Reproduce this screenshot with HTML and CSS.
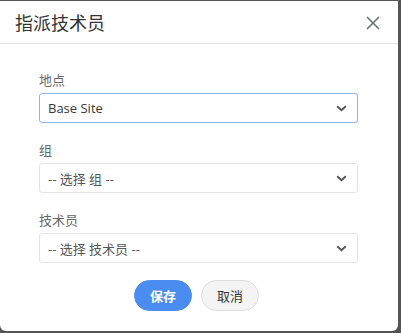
FILE: index.html
```html
<!DOCTYPE html>
<html lang="zh-CN">
<head>
  <meta charset="UTF-8" />
  <title>指派技术员</title>
  <link rel="stylesheet" href="styles.css">
</head>
<body>
  <div class="modal">
    <div class="modal-header">
      <h2 class="title">指派技术员</h2>
      <svg class="close" width="14" height="14" viewBox="0 0 14 14"><path d="M1 1L13 13M13 1L1 13" stroke="#6b7178" stroke-width="1.6" fill="none"/></svg>
    </div>
    <div class="modal-body">
      <div class="field">
        <label>地点</label>
        <div class="select focus"><span class="value">Base Site</span><svg width="11" height="7" viewBox="0 0 11 7"><path d="M1.2 1.2L5.5 5.3L9.8 1.2" stroke="#555" stroke-width="1.9" fill="none"/></svg></div>
      </div>
      <div class="field">
        <label>组</label>
        <div class="select"><span class="placeholder">-- 选择 组 --</span><svg width="11" height="7" viewBox="0 0 11 7"><path d="M1.2 1.2L5.5 5.3L9.8 1.2" stroke="#555" stroke-width="1.9" fill="none"/></svg></div>
      </div>
      <div class="field">
        <label>技术员</label>
        <div class="select"><span class="placeholder">-- 选择 技术员 --</span><svg width="11" height="7" viewBox="0 0 11 7"><path d="M1.2 1.2L5.5 5.3L9.8 1.2" stroke="#555" stroke-width="1.9" fill="none"/></svg></div>
      </div>
    </div>
    <div class="modal-footer">
      <button class="btn primary">保存</button>
      <button class="btn">取消</button>
    </div>
  </div>
</body>
</html>
```

FILE: styles.css
```css
html, body {
  margin: 0;
  height: 100%;
}
body {
  background: #555;
  font-family: "Open Sans", "Noto Sans CJK SC", sans-serif;
  color: #333;
  padding-top: 1px;
  box-sizing: border-box;
}
.modal {
  width: 398px;
  height: 330px;
  background: #fff;
  border-radius: 0 0 6px 6px;
  box-sizing: border-box;
}
.modal-header {
  height: 42px;
  border-bottom: 1px solid #e2e2e2;
  display: flex;
  align-items: center;
  justify-content: space-between;
  padding: 0 18px 0 15px;
}
.title {
  margin: 0;
  font-size: 18px;
  font-weight: normal;
  color: #333;
  line-height: 24px;
  padding-top: 1px;
}
.close {
  display: block;
  margin-top: 2px;
}
.modal-body {
  padding: 27px 40px 0 39px;
}
.field {
  margin-bottom: 18px;
}
.field label {
  display: block;
  font-size: 13px;
  line-height: 18px;
  color: #666;
  margin-bottom: 4px;
}
.select {
  height: 30px;
  border: 1px solid #e3e3e3;
  border-radius: 3px;
  box-sizing: border-box;
  display: flex;
  align-items: center;
  justify-content: space-between;
  padding: 0 10px 0 8px;
  font-size: 13px;
}
.select.focus {
  border-color: #8fb3ee;
}
.value {
  color: #3a3a3a;
}
.placeholder {
  color: #555;
}
.modal-footer {
  display: flex;
  justify-content: center;
  gap: 9px;
  padding: 0 5px 0 0;
  margin-top: -1px;
}
.btn {
  width: 58px;
  height: 31px;
  border-radius: 16px;
  border: 1px solid #ddd;
  background: #f4f4f4;
  color: #333;
  font-family: "Noto Sans CJK SC", sans-serif;
  font-size: 13px;
  padding: 0;
}
.btn.primary {
  background: #4a8cf0;
  border-color: #4a8cf0;
  color: #fff;
  font-weight: bold;
}
```
